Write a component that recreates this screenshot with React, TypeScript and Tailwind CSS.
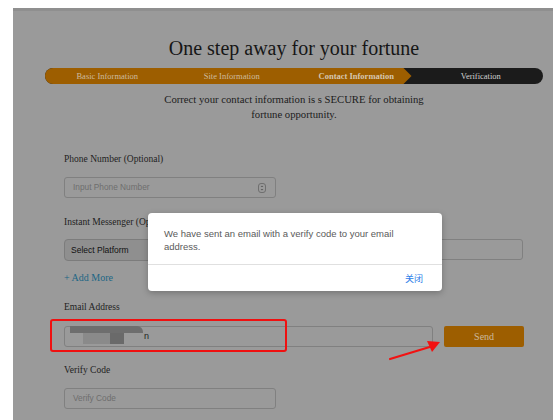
import React from "react";

// Step labels for the progress bar
const steps = ["Basic Information", "Site Information", "Contact Information", "Verification"];

function Spinner() {
  return (
    <svg width="8" height="10" viewBox="0 0 8 10" fill="none">
      <rect x="0.5" y="0.5" width="7" height="9" rx="2.5" stroke="#6f6f6f" />
      <path d="M2.6 4 L4 2.5 L5.4 4 Z" fill="#5a5a5a" />
      <path d="M2.6 6 L4 7.5 L5.4 6 Z" fill="#5a5a5a" />
    </svg>
  );
}

function Label({ children, className = "" }: { children: React.ReactNode; className?: string }) {
  return <div className={`text-[9.5px] leading-[14px] text-[#222] ${className}`}>{children}</div>;
}

export default function App() {
  return (
    <div className="w-[553px] h-[420px] bg-white pl-[13px] pt-[8px] overflow-hidden font-['Liberation_Serif','Times_New_Roman',serif]">
      <div className="relative h-full bg-[#9a9a9a]">
        <div className="h-[3px] bg-[#8f8f8f]" />

        <div className="ml-[32px] w-[498px]">
          <h1 className="mt-[25px] text-center text-[20px] leading-[24px] text-[#161616]">
            One step away for your fortune
          </h1>

          {/* progress bar */}
          <div className="mt-[8px] grid h-[16px] grid-cols-4 overflow-hidden rounded-full bg-[#1b1b1b]">
            {steps.map((s, i) => (
              <div
                key={s}
                className={
                  i < 2
                    ? "flex items-center justify-center bg-[#9d5e00] text-[8.5px] text-[#cdbb9f]"
                    : i === 2
                    ? "flex items-center justify-center bg-[#9d5e00] text-[8.5px] font-bold text-[#d6c7b0] [clip-path:polygon(0_0,calc(100%-15px)_0,calc(100%-7px)_50%,calc(100%-15px)_100%,0_100%)]"
                    : "flex items-center justify-center text-[8.5px] text-[#d2d2d2]"
                }
              >
                {s}
              </div>
            ))}
          </div>

          <p className="mx-auto mt-[8px] max-w-[275px] text-center text-[10.7px] leading-[15px] text-[#1c1c1c]">
            Correct your contact information is s SECURE for obtaining fortune opportunity.
          </p>

          {/* form */}
          <div className="mt-[30px] px-[19px]">
            <Label>Phone Number (Optional)</Label>
            <div className="mt-[11px] flex h-[21px] w-[212px] items-center justify-between rounded-[3px] border border-[#808080] pl-[8px] pr-[9px]">
              <span className="font-['Liberation_Sans',Arial,sans-serif] text-[8.3px] text-[#6e6e6e]">Input Phone Number</span>
              <Spinner />
            </div>

            <Label className="mt-[17px]">Instant Messenger (Optional)</Label>
            <div className="mt-[10px] flex h-[22px] gap-[10px]">
              <div className="flex w-[150px] items-center rounded-[4px] border border-[#7c7c7c] bg-[#8f8f8f] pl-[6px] font-['Liberation_Sans',Arial,sans-serif] text-[8.5px] font-medium text-[#111]">
                Select Platform
              </div>
              <div className="mb-[1px] mr-[1px] flex-1 rounded-[3px] border border-[#808080]" />
            </div>

            <div className="mt-[10px] text-[10px] leading-[14px] text-[#1c6685]">+ Add More</div>

            <Label className="mt-[15px]">Email Address</Label>
            <div className="mt-[12px] flex h-[21px] gap-[11px]">
              <div className="relative w-[370px] rounded-[3px] border border-[#808080]">
                {/* redacted address */}
                <div className="absolute left-[5px] top-[-1px] h-[7px] w-[73px] rounded-tr-[6px] bg-[#6e6e6e]" />
                <div className="absolute left-[18px] top-[6px] h-[11px] w-[27px] bg-[#8a8a8a]" />
                <div className="absolute left-[45px] top-[6px] h-[11px] w-[14px] bg-[#6a6a6a]" />
                <span className="absolute left-[79px] top-[3px] font-['Liberation_Sans',Arial,sans-serif] text-[9px] text-[#222]">n</span>
              </div>
              <button className="w-[80px] rounded-[2px] bg-[#9d5e00] text-[10px] text-[#cbb99c]">Send</button>
            </div>

            <Label className="mt-[16px]">Verify Code</Label>
            <div className="mt-[11px] flex h-[21px] w-[212px] items-center rounded-[3px] border border-[#808080] pl-[8px]">
              <span className="font-['Liberation_Sans',Arial,sans-serif] text-[8.3px] text-[#6e6e6e]">Verify Code</span>
            </div>
          </div>
        </div>

        {/* annotation: red box */}
        <div className="absolute left-[37px] top-[311px] h-[33px] w-[237px] rounded-[3px] border-2 border-[#f01010]" />

        {/* annotation: red arrow */}
        <svg className="absolute left-[370px] top-[326px]" width="64" height="32" viewBox="0 0 64 32">
          <path d="M7 25 L50 12" stroke="#f21212" strokeWidth="2.2" strokeLinecap="round" />
          <path d="M57 8 L44 7 L49 18 Z" fill="#f21212" />
        </svg>

        {/* alert dialog */}
        <div className="absolute left-[135px] top-[205px] w-[294px] rounded-[4px] bg-white font-['Liberation_Sans',Arial,sans-serif] shadow-[0_2px_6px_rgba(0,0,0,0.25)]">
          <p className="px-[16px] pb-[11px] pt-[14px] text-[9.5px] leading-[13px] text-[#5a5a5a]">
            We have sent an email with a verify code to your email address.
          </p>
          <div className="flex h-[27px] items-center justify-end border-t border-[#e0e0e0] pr-[19px] pt-[2px]">
            <span className="font-['Noto_Sans_CJK_SC',sans-serif] text-[9px] text-[#2b7de9]">关闭</span>
          </div>
        </div>
      </div>
    </div>
  );
}
